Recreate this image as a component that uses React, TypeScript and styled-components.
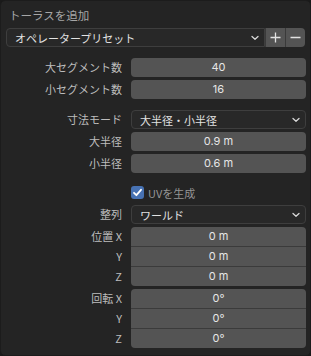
import React from "react";
import styled, { createGlobalStyle } from "styled-components";

const GlobalStyle = createGlobalStyle`
  html, body { margin: 0; padding: 0; background: #1a1a1a; }
  body { font-family: "Inter", "Noto Sans CJK JP", sans-serif; }
  * { box-sizing: border-box; }
`;

const jp = `"Noto Sans CJK JP", "Inter", sans-serif`;

const Panel = styled.div`
  width: 311px;
  height: 356px;
  background: #242424;
  border: 1px solid #1c1c1c;
  border-radius: 5px;
  padding: 4px 5px 0 5px;
  display: flex;
  flex-direction: column;
  font-size: 11px;
  overflow: hidden;
`;

const Title = styled.div`
  height: 20px;
  line-height: 20px;
  padding-left: 3px;
  color: #a6a6a6;
  font-family: ${jp};
  font-size: 11.5px;
`;

const PresetRow = styled.div`
  display: flex;
  height: 19px;
  margin-top: 3px;
`;

const Dropdown = styled.div<{ $grow?: boolean }>`
  display: flex;
  align-items: center;
  justify-content: space-between;
  height: 19px;
  padding: 0 5px 0 8px;
  background: #282828;
  border: 1px solid #3e3e3e;
  border-radius: ${(p) => (p.$grow ? "4px 0 0 4px" : "4px")};
  color: #e2e2e2;
  font-family: ${jp};
  flex: ${(p) => (p.$grow ? "1" : "none")};
  white-space: nowrap;
`;

const IconButton = styled.div<{ $last?: boolean }>`
  width: 20px;
  height: 19px;
  background: #545454;
  display: flex;
  align-items: center;
  justify-content: center;
  border-left: 1px solid #3a3a3a;
  border-radius: ${(p) => (p.$last ? "0 4px 4px 0" : "0")};
`;

const Section = styled.div<{ $top: number }>`
  display: flex;
  flex-direction: column;
  gap: 3px;
  margin-top: ${(p) => p.$top}px;
`;

const Group = styled.div`
  display: flex;
  flex-direction: column;
`;

const PropRow = styled.div`
  display: grid;
  grid-template-columns: 116px 175px;
  column-gap: 9px;
  align-items: stretch;
`;

const Label = styled.div`
  text-align: right;
  color: #bdbdbd;
  font-family: ${jp};
  line-height: 19px;
  white-space: nowrap;
  align-self: end;
  height: 19px;
`;

type Pos = "single" | "first" | "middle" | "last";

const radiusFor = (p: Pos) =>
  p === "single" ? "4px" : p === "first" ? "4px 4px 0 0" : p === "last" ? "0 0 4px 4px" : "0";

const NumField = styled.div<{ $pos: Pos }>`
  height: ${(p) => (p.$pos === "middle" || p.$pos === "last" ? "20px" : "19px")};
  line-height: 19px;
  background: #545454;
  color: #e6e6e6;
  text-align: center;
  border-radius: ${(p) => radiusFor(p.$pos)};
  border-top: ${(p) => (p.$pos === "middle" || p.$pos === "last" ? "1px solid #3b3b3b" : "none")};
`;

const CheckRow = styled.div`
  display: flex;
  align-items: center;
  gap: 4px;
  height: 19px;
  padding-left: 125px;
  color: #959595;
  font-family: ${jp};
`;

const CheckBox = styled.div`
  width: 13px;
  height: 13px;
  border-radius: 3px;
  background: #4772b3;
  display: flex;
  align-items: center;
  justify-content: center;
`;

const Chevron = () => (
  <svg width="8" height="6" viewBox="0 0 8 6">
    <path d="M1 1.5 L4 4.3 L7 1.5" fill="none" stroke="#d8d8d8" strokeWidth="1.3" strokeLinecap="round" strokeLinejoin="round" />
  </svg>
);

const PlusIcon = () => (
  <svg width="11" height="11" viewBox="0 0 11 11">
    <path d="M5.5 0.5 V10.5 M0.5 5.5 H10.5" stroke="#e2e2e2" strokeWidth="1.3" />
  </svg>
);

const MinusIcon = () => (
  <svg width="11" height="11" viewBox="0 0 11 11">
    <path d="M0.5 5.5 H10.5" stroke="#e2e2e2" strokeWidth="1.3" />
  </svg>
);

const CheckIcon = () => (
  <svg width="11" height="11" viewBox="0 0 11 11">
    <path d="M2 5.8 L4.4 8.2 L9 2.8" fill="none" stroke="#ffffff" strokeWidth="1.8" strokeLinecap="round" strokeLinejoin="round" />
  </svg>
);

const Prop = ({ label, value, pos = "single" }: { label: string; value: string; pos?: Pos }) => (
  <PropRow>
    <Label>{label}</Label>
    <NumField $pos={pos}>{value}</NumField>
  </PropRow>
);

const EnumProp = ({ label, value }: { label: string; value: string }) => (
  <PropRow>
    <Label>{label}</Label>
    <Dropdown>
      <span>{value}</span>
      <Chevron />
    </Dropdown>
  </PropRow>
);

const VectorProp = ({ label, values }: { label: string; values: string[] }) => {
  const axes = ["X", "Y", "Z"];
  return (
    <Group>
      {values.map((v, i) => (
        <Prop
          key={i}
          label={i === 0 ? `${label} ${axes[i]}` : axes[i]}
          value={v}
          pos={i === 0 ? "first" : i === values.length - 1 ? "last" : "middle"}
        />
      ))}
    </Group>
  );
};

export default function App() {
  return (
    <>
      <GlobalStyle />
      <Panel>
        <Title>トーラスを追加</Title>
        <PresetRow>
          <Dropdown $grow>
            <span>オペレータープリセット</span>
            <Chevron />
          </Dropdown>
          <IconButton>
            <PlusIcon />
          </IconButton>
          <IconButton $last>
            <MinusIcon />
          </IconButton>
        </PresetRow>
        <Section $top={11}>
          <Prop label="大セグメント数" value="40" />
          <Prop label="小セグメント数" value="16" />
        </Section>
        <Section $top={11}>
          <EnumProp label="寸法モード" value="大半径・小半径" />
          <Prop label="大半径" value="0.9 m" />
          <Prop label="小半径" value="0.6 m" />
        </Section>
        <Section $top={10}>
          <CheckRow>
            <CheckBox>
              <CheckIcon />
            </CheckBox>
            <span>UVを生成</span>
          </CheckRow>
          <EnumProp label="整列" value="ワールド" />
          <VectorProp label="位置" values={["0 m", "0 m", "0 m"]} />
          <VectorProp label="回転" values={["0°", "0°", "0°"]} />
        </Section>
      </Panel>
    </>
  );
}
